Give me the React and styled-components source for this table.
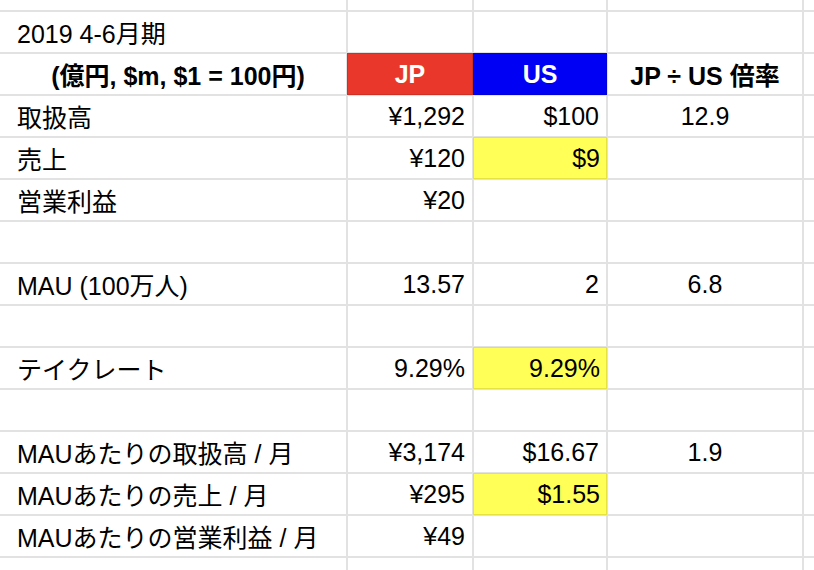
import React from "react";
import styled, { createGlobalStyle, css } from "styled-components";

const Global = createGlobalStyle`
  html, body { margin: 0; padding: 0; background: #fff; overflow: hidden; }
  body { font-family: "Liberation Sans", "Noto Sans CJK JP", sans-serif; }
`;

const Sheet = styled.div`
  display: grid;
  grid-template-columns: 8px 336px 124px 132px 194px 1fr;
  grid-template-rows: 10px repeat(13, 40px) 1fr;
  gap: 2px;
  width: 814px;
  height: 570px;
  background: #e2e2e2;
  overflow: hidden;
`;

const fills = {
  red: { bg: "#e9382b", border: "#d22f24" },
  blue: { bg: "#0000f5", border: "#0000d8" },
  yellow: { bg: "#ffff57", border: "#e6e23f" },
};

const Cell = styled.div`
  background: #fff;
  display: flex;
  align-items: center;
  justify-content: ${(p) =>
    p.$align === "right" ? "flex-end" : p.$align === "center" ? "center" : "flex-start"};
  padding: 0 7px 0 7px;
  font-size: 25px;
  font-weight: ${(p) => (p.$bold ? 700 : 400)};
  color: ${(p) => (p.$white ? "#fff" : "#000")};
  white-space: nowrap;
  overflow: hidden;
  min-width: 0;
  ${(p) =>
    p.$fill &&
    css`
      background: ${fills[p.$fill].bg};
      border: 1px solid ${fills[p.$fill].border};
      margin: -1px;
      padding: 0 6px;
      position: relative;
      z-index: 1;
    `}
`;

const rows = [
  [{ t: "2019 4-6月期" }, {}, {}, {}],
  [
    { t: "(億円, $m, $1 = 100円)", a: "center", b: true },
    { t: "JP", a: "center", b: true, w: true, f: "red" },
    { t: "US", a: "center", b: true, w: true, f: "blue" },
    { t: "JP ÷ US 倍率", a: "center", b: true },
  ],
  [{ t: "取扱高" }, { t: "¥1,292", a: "right" }, { t: "$100", a: "right" }, { t: "12.9", a: "center" }],
  [{ t: "売上" }, { t: "¥120", a: "right" }, { t: "$9", a: "right", f: "yellow" }, {}],
  [{ t: "営業利益" }, { t: "¥20", a: "right" }, {}, {}],
  [{}, {}, {}, {}],
  [{ t: "MAU (100万人)" }, { t: "13.57", a: "right" }, { t: "2", a: "right" }, { t: "6.8", a: "center" }],
  [{}, {}, {}, {}],
  [{ t: "テイクレート" }, { t: "9.29%", a: "right" }, { t: "9.29%", a: "right", f: "yellow" }, {}],
  [{}, {}, {}, {}],
  [
    { t: "MAUあたりの取扱高 / 月" },
    { t: "¥3,174", a: "right" },
    { t: "$16.67", a: "right" },
    { t: "1.9", a: "center" },
  ],
  [{ t: "MAUあたりの売上 / 月" }, { t: "¥295", a: "right" }, { t: "$1.55", a: "right", f: "yellow" }, {}],
  [{ t: "MAUあたりの営業利益 / 月" }, { t: "¥49", a: "right" }, {}, {}],
];

export default function App() {
  const cells = [];
  // top partial row
  for (let c = 0; c < 6; c++) cells.push(<Cell key={`top-${c}`} />);
  rows.forEach((row, r) => {
    cells.push(<Cell key={`l-${r}`} />);
    row.forEach((cell, c) => (
      cells.push(
        <Cell
          key={`${r}-${c}`}
          $align={cell.a}
          $bold={cell.b}
          $white={cell.w}
          $fill={cell.f}
        >
          {cell.t}
        </Cell>
      )
    ));
    cells.push(<Cell key={`r-${r}`} />);
  });
  for (let c = 0; c < 6; c++) cells.push(<Cell key={`bot-${c}`} />);
  return (
    <>
      <Global />
      <Sheet>{cells}</Sheet>
    </>
  );
}
